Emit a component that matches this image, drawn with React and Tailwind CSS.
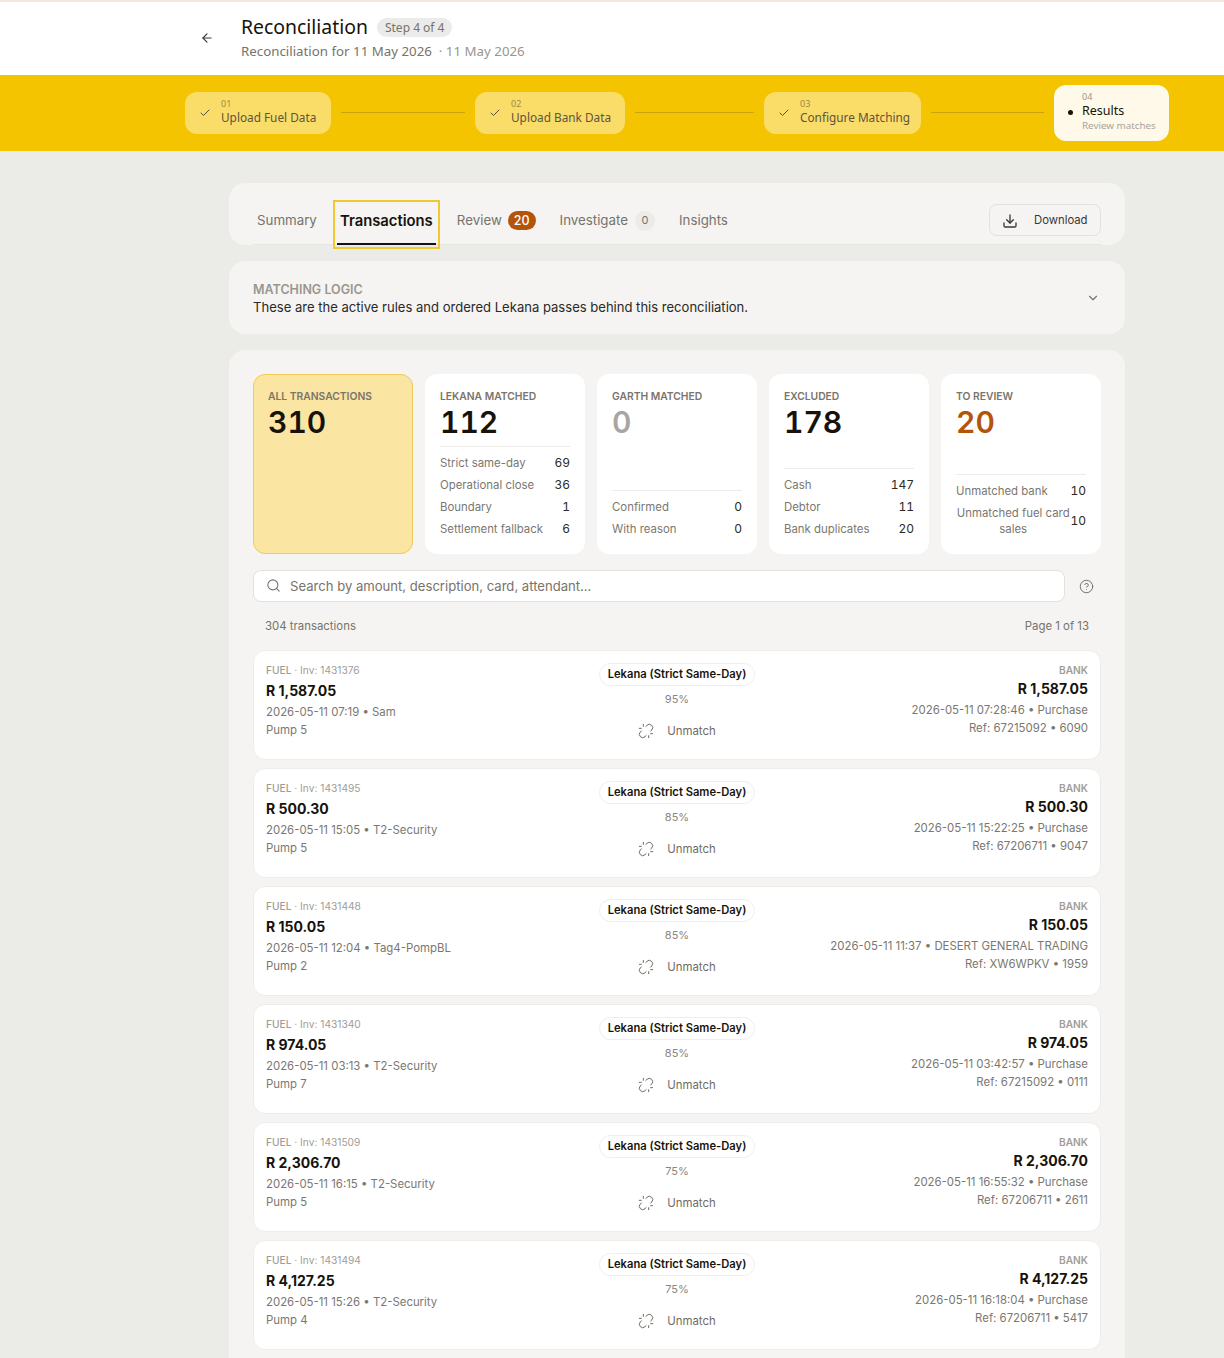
import React from 'react'
import { ArrowLeft, Check, ChevronDown, CircleHelp, Download, Search, Unlink } from 'lucide-react'

const rows = [
  { inv: '1431376', amount: 'R 1,587.05', when: '2026-05-11 07:19', who: 'Sam', pump: 'Pump 5', pct: '95%', bankWhen: '2026-05-11 07:28:46', desc: 'Purchase', ref: 'Ref: 67215092', card: '6090' },
  { inv: '1431495', amount: 'R 500.30', when: '2026-05-11 15:05', who: 'T2-Security', pump: 'Pump 5', pct: '85%', bankWhen: '2026-05-11 15:22:25', desc: 'Purchase', ref: 'Ref: 67206711', card: '9047' },
  { inv: '1431448', amount: 'R 150.05', when: '2026-05-11 12:04', who: 'Tag4-PompBL', pump: 'Pump 2', pct: '85%', bankWhen: '2026-05-11 11:37', desc: 'DESERT GENERAL TRADING', ref: 'Ref: XW6WPKV', card: '1959' },
  { inv: '1431340', amount: 'R 974.05', when: '2026-05-11 03:13', who: 'T2-Security', pump: 'Pump 7', pct: '85%', bankWhen: '2026-05-11 03:42:57', desc: 'Purchase', ref: 'Ref: 67215092', card: '0111' },
  { inv: '1431509', amount: 'R 2,306.70', when: '2026-05-11 16:15', who: 'T2-Security', pump: 'Pump 5', pct: '75%', bankWhen: '2026-05-11 16:55:32', desc: 'Purchase', ref: 'Ref: 67206711', card: '2611' },
  { inv: '1431494', amount: 'R 4,127.25', when: '2026-05-11 15:26', who: 'T2-Security', pump: 'Pump 4', pct: '75%', bankWhen: '2026-05-11 16:18:04', desc: 'Purchase', ref: 'Ref: 67206711', card: '5417' },
]

const DoneStep = ({ num, label, width }) => (
  <div className={`flex h-[42px] shrink-0 items-center gap-[10px] rounded-xl bg-[#fadc68] pl-[14px] ${width}`}>
    <Check size={12} strokeWidth={2} className="text-[#57503a]" />
    <div className="pb-[1px]">
      <div className="text-[9px] leading-[10px] text-[#9b8a45]">{num}</div>
      <div className="text-[11.8px] leading-[16px] text-[#5c5540]">{label}</div>
    </div>
  </div>
)

const Line = ({ width }) => <div className={`mx-[10px] h-px shrink-0 bg-[#c9a20c] ${width}`} />

const Stat = ({ label, value, color = 'text-[#17130b]', lines = [], active }) => (
  <div className={`flex h-[180px] flex-col rounded-xl pb-[17px] ${active ? 'border border-[#f0cb58] bg-[#fbe5a2] px-[14px] pt-[14px]' : 'bg-white px-[15px] pt-[15px]'}`}>
    <div className="text-[10.3px] font-semibold uppercase leading-[14px] text-[#7a746a]">{label}</div>
    <div className={`mt-[1px] text-[30px] font-semibold tabular-nums leading-[37px] ${color}`}>{value}</div>
    {lines.length > 0 && (
      <div className="mt-auto flex flex-col gap-[6px] border-t border-[#eeece9] pt-[8px]">
        {lines.map((l) => (
          <div key={l[0]} className="flex items-center justify-between text-[11.4px] leading-[16px]">
            <span className="text-center text-[#7b7770]">{l[0]}</span>
            <span className="text-[12px] tabular-nums text-[#2b2925]">{l[1]}</span>
          </div>
        ))}
      </div>
    )}
  </div>
)

const Row = ({ r }) => (
  <div className="grid h-[110px] grid-cols-3 rounded-xl border border-[#eeece9] bg-white px-3 pt-[12px]">
    <div>
      <div className="text-[10.2px] leading-[15px] text-[#a19d96]"><span className="font-medium">FUEL</span> · Inv: {r.inv}</div>
      <div className="mt-[2px] text-[14px] font-bold leading-[22px] text-[#17130b]">{r.amount}</div>
      <div className="mt-[1px] text-[11.4px] leading-[18px] text-[#7b7770]">{r.when} • {r.who}</div>
      <div className="text-[11.4px] leading-[18px] text-[#7b7770]">{r.pump}</div>
    </div>
    <div className="flex flex-col items-center">
      <div className="rounded-full border border-[#f0eeeb] px-2 py-[2px] text-[11.2px] font-semibold leading-[17px] text-[#17130b]">Lekana (Strict Same-Day)</div>
      <div className="mt-[5px] text-[11px] leading-[16px] text-[#8a867f]">{r.pct}</div>
      <div className="mt-[16px] flex items-center gap-[13px] text-[11.4px] leading-[16px] text-[#6f6b64]">
        <Unlink size={16} strokeWidth={1.5} />
        Unmatch
      </div>
    </div>
    <div className="text-right">
      <div className="text-[10.2px] font-semibold leading-[15px] text-[#a19d96]">BANK</div>
      <div className="text-[14px] font-bold leading-[22px] text-[#17130b]">{r.amount}</div>
      <div className="mt-[1px] text-[11.4px] leading-[18px] text-[#7b7770]">{r.bankWhen} • {r.desc}</div>
      <div className="text-[11.4px] leading-[18px] text-[#7b7770]">{r.ref} • {r.card}</div>
    </div>
  </div>
)

const App = () => {
  return (
    <div className="h-[1358px] overflow-hidden bg-[#ebebe7] font-['Inter',sans-serif]">
      {/* top bar */}
      <div className="h-[75px] border-t-2 border-[#f1e9dc] bg-white pl-[130px] font-['Noto_Sans',sans-serif]">
        <div className="mx-auto flex w-[984px] items-center pt-[12px]">
          <ArrowLeft size={14} className="ml-[15px] mr-[27px] text-[#3a3a3a]" />
          <div>
            <div className="flex items-center gap-[9px]">
              <span className="text-[19.4px] leading-[26px] text-[#17130b]">Reconciliation</span>
              <span className="rounded-full bg-[#ebebe9] px-2 text-[12px] leading-[19px] text-[#77736b]">Step 4 of 4</span>
            </div>
            <div className="mt-[1px] text-[13.3px] leading-[20px] text-[#77736b]">
              Reconciliation for 11 May 2026 <span className="text-[#9a968f]">&nbsp;· 11 May 2026</span>
            </div>
          </div>
        </div>
      </div>

      {/* stepper */}
      <div className="h-[76px] bg-[#f5c400] pl-[130px] font-['Noto_Sans',sans-serif]">
        <div className="mx-auto flex h-full w-[984px] items-center pb-[1px]">
          <DoneStep num="01" label="Upload Fuel Data" width="w-[146px]" />
          <Line width="w-[124px]" />
          <DoneStep num="02" label="Upload Bank Data" width="w-[150px]" />
          <Line width="w-[119px]" />
          <DoneStep num="03" label="Configure Matching" width="w-[157px]" />
          <Line width="w-[113px]" />
          <div className="flex h-[56px] w-[115px] shrink-0 items-center gap-[9px] rounded-xl bg-[#fef9e8] pl-[14px]">
            <span className="size-[5px] rounded-full bg-[#17130b]" />
            <div>
              <div className="text-[9px] leading-[10px] text-[#9a968f]">04</div>
              <div className="text-[12.5px] leading-[17px] text-[#17130b]">Results</div>
              <div className="text-[9.8px] leading-[14px] text-[#a8a49c]">Review matches</div>
            </div>
          </div>
        </div>
      </div>

      <div className="pl-[130px] pt-[32px]">
        <div className="mx-auto flex w-[896px] flex-col gap-4">
          {/* tabs */}
          <div className="h-[62px] rounded-2xl bg-[#f5f4f2] px-6">
            <div className="flex h-full items-end justify-between border-b border-[#e6e5e2] pb-[8px]">
              <div className="-mb-[1px] flex items-center text-[13.3px] text-[#77736b]">
                <span className="ml-[4px]">Summary</span>
                <button className="-mb-[8px] ml-[20px] mr-[21px] h-[41px] w-[99px] border-b-2 border-[#17130b] pb-[5px] text-[14.8px] font-semibold text-[#17130b] outline-2 outline-offset-2 outline-[#f0c830]">Transactions</button>
                <span>Review</span>
                <span className="ml-[6px] rounded-full bg-[#b45309] px-[6px] text-[12.5px] font-medium leading-[19px] text-white">20</span>
                <span className="ml-[24px]">Investigate</span>
                <span className="ml-[7px] flex size-[20px] items-center justify-center rounded-full bg-[#ebebe9] text-[11px]">0</span>
                <span className="ml-[24px]">Insights</span>
              </div>
              <button className="flex h-[32px] w-[112px] items-center gap-[16px] rounded-lg border border-[#e2e1de] pl-[12px] pt-[1px] text-[11.3px] text-[#3a3833]">
                <Download size={16} strokeWidth={2} />
                Download
              </button>
            </div>
          </div>

          {/* matching logic */}
          <div className="flex h-[73px] items-center justify-between rounded-2xl bg-[#f5f4f2] pl-6 pr-[25px]">
            <div className="pt-[3px]">
              <div className="text-[12.5px] font-semibold leading-[17px] text-[#9a968f]">MATCHING LOGIC</div>
              <div className="text-[13.05px] leading-[19px] text-[#2b2925]">These are the active rules and ordered Lekana passes behind this reconciliation.</div>
            </div>
            <ChevronDown size={14} className="text-[#77736b]" />
          </div>

          {/* results, runs on past the bottom of the window */}
          <div className="rounded-2xl bg-[#f5f4f2] px-6 pb-10 pt-6">
            <div className="grid grid-cols-5 gap-3">
              <Stat active label="All transactions" value="310" />
              <Stat label="Lekana matched" value="112" lines={[['Strict same-day', 69], ['Operational close', 36], ['Boundary', 1], ['Settlement fallback', 6]]} />
              <Stat label="Garth matched" value="0" color="text-[#a8a6a2]" lines={[['Confirmed', 0], ['With reason', 0]]} />
              <Stat label="Excluded" value="178" lines={[['Cash', 147], ['Debtor', 11], ['Bank duplicates', 20]]} />
              <Stat label="To review" value="20" color="text-[#b45309]" lines={[['Unmatched bank', 10], ['Unmatched fuel card sales', 10]]} />
            </div>

            <div className="mt-4 flex items-center">
              <div className="flex h-[32px] w-[812px] items-center gap-[9px] rounded-lg border border-[#e2e1de] bg-white pl-[12px] text-[13.1px] text-[#77736b]">
                <Search size={15} strokeWidth={1.75} className="-mt-[1px]" />
                <span className="pt-[1px]">Search by amount, description, card, attendant...</span>
              </div>
              <CircleHelp size={15} strokeWidth={1.5} className="ml-[14px] text-[#6f6b64]" />
            </div>

            <div className="mt-[16px] flex justify-between px-3 text-[11.4px] leading-[16px] text-[#77736b]">
              <span>304 transactions</span>
              <span>Page 1 of 13</span>
            </div>

            <div className="mt-[16px] flex flex-col gap-[8px]">
              {rows.map((r) => <Row key={r.inv} r={r} />)}
            </div>
          </div>
        </div>
      </div>
    </div>
  )
}

export default App
